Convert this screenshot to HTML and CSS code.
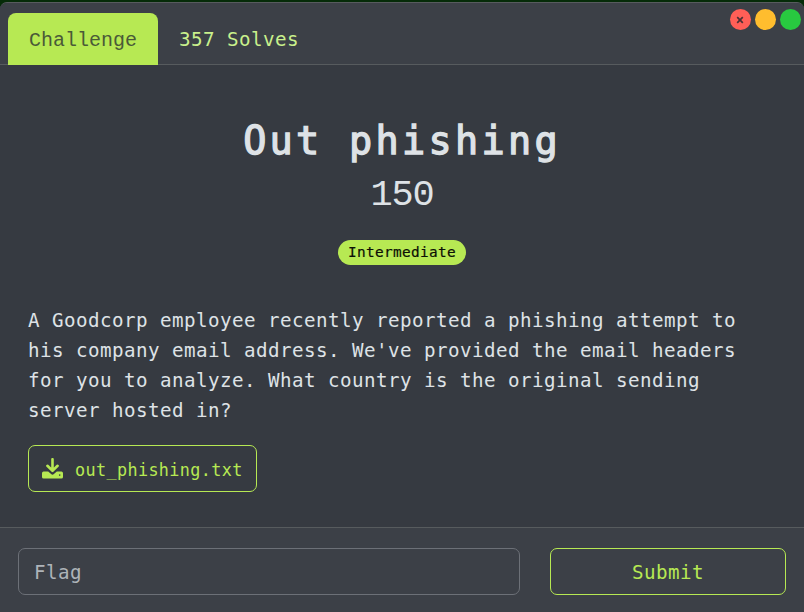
FILE: index.html
```html
<!DOCTYPE html>
<html lang="en">
<head>
<meta charset="utf-8">
<title>Out phishing</title>
<link rel="stylesheet" href="styles.css">
</head>
<body>
<main class="modal">
  <header class="header">
    <nav class="tabs">
      <a class="tab active">Challenge</a>
      <a class="tab">357 Solves</a>
    </nav>
    <div class="controls">
      <span class="dot red"><svg viewBox="0 0 8 8" width="8" height="8"><path d="M1.2 1.2l5.6 5.6M6.8 1.2L1.2 6.8"/></svg></span>
      <span class="dot yellow"></span>
      <span class="dot green"></span>
    </div>
  </header>
  <section class="body">
    <h1 class="title">Out phishing</h1>
    <div class="value">150</div>
    <div class="tags"><span class="badge">Intermediate</span></div>
    <p class="desc">A Goodcorp employee recently reported a phishing attempt to his company email address. We've provided the email headers for you to analyze. What country is the original sending server hosted in?</p>
    <a class="file"><svg class="icon" viewBox="0 0 21 21" width="21" height="21"><path d="M10.5 1.2v11M5.4 7.8l5.1 5 5.1-5" class="arrow"/><path d="M1.6 13.6h4.6l2.9 2.5q1.4 1.1 2.8 0l2.9-2.5h4.6q1.6 0 1.6 1.6v3.7q0 1.6-1.6 1.6H1.6Q0 20.5 0 18.9v-3.7q0-1.6 1.6-1.6z"/><circle cx="17.7" cy="17.1" r=".8" class="hole"/></svg><span>out_phishing.txt</span></a>
  </section>
  <footer class="footer">
    <input class="flag" type="text" placeholder="Flag">
    <button class="submit">Submit</button>
  </footer>
</main>
</body>
</html>
```
FILE: styles.css
```css
* { box-sizing: border-box; }
body {
  margin: 0;
  height: 612px;
  padding-top: 2px;
  overflow: hidden;
  background: #052b08;
  color: #dee2e6;
  font: 19.2px/30px "DejaVu Sans Mono", "Liberation Mono", monospace;
  letter-spacing: 0.45px;
}
.modal {
  height: 610px;
  display: flex;
  flex-direction: column;
  background: #363a41;
  border-top: 1px solid #575b5e;
  border-radius: 7px 7px 0 0;
  overflow: hidden;
}
.header {
  height: 62px;
  flex: none;
  display: flex;
  justify-content: space-between;
  padding: 10px 3.5px 0 8px;
  background: #3c4047;
  border-bottom: 1px solid #575b5e;
}
.tabs { display: flex; height: 52px; }
.tab {
  padding: 12px 21px 10px;
  color: #c9f08c;
}
.active {
  background: #b7e953;
  color: #4a5a38;
  border-radius: 8px 8px 0 0;
  font-family: "Liberation Mono", monospace;
  font-size: 20px;
  letter-spacing: 0;
  padding-top: 13px;
  padding-bottom: 9px;
}
.controls { display: flex; gap: 4px; margin-top: -4px; }
.dot {
  width: 21px;
  height: 21px;
  border-radius: 50%;
  display: flex;
  align-items: center;
  justify-content: center;
}
.dot path { stroke: #4a3035; stroke-width: 1.7; fill: none; }
.red { background: #ff5f57; }
.yellow { background: #ffbd2e; }
.green { background: #28c940; }
.body {
  height: 462px;
  flex: none;
  padding: 50px 28px 0;
}
.title {
  margin: 0;
  text-align: center;
  font-size: 38.5px;
  font-weight: 400;
  line-height: 52px;
  letter-spacing: 3.3px;
  -webkit-text-stroke: 1.3px #dee2e6;
  white-space: nowrap;
}
.value {
  text-align: center;
  font-family: "Liberation Mono", monospace;
  font-size: 37px;
  line-height: 56px;
  letter-spacing: -1.2px;
}
.tags { display: flex; justify-content: center; margin-top: 17px; }
.badge {
  height: 25px;
  padding: 0 10px;
  border-radius: 13px;
  background: #b7e953;
  color: #0c1005;
  font-size: 14.4px;
  line-height: 24px;
  letter-spacing: 0.33px;
  -webkit-text-stroke: 0.2px #0c1005;
}
.desc { margin: 41px 0 19px; }
.file {
  width: 229px;
  height: 47px;
  display: flex;
  align-items: center;
  padding: 0 13px;
  border: 1px solid #b7e953;
  border-radius: 7px;
  color: #b7e953;
  font-size: 16.8px;
  letter-spacing: 0.38px;
}
.file span { margin-left: 12px; padding-top: 2px; }
.icon { flex: none; fill: #b7e953; }
.icon .arrow { fill: none; stroke: #b7e953; stroke-width: 2.6; stroke-linecap: round; stroke-linejoin: round; }
.icon .hole { fill: #363a41; }
.footer {
  flex: 1;
  display: flex;
  gap: 30px;
  padding: 20px 18px 0;
  background: #3c4047;
  border-top: 1px solid #575b5e;
}
.flag, .submit {
  height: 47px;
  border-radius: 7px;
  background: transparent;
  font: inherit;
  letter-spacing: inherit;
}
.flag {
  width: 502px;
  padding: 2px 15px 0;
  border: 1px solid #6c7077;
}
.flag::placeholder { color: #aeb4b9; opacity: 1; }
.submit {
  width: 236px;
  padding: 2px 0 0;
  border: 1px solid #b7e953;
  color: #b7e953;
}
```
